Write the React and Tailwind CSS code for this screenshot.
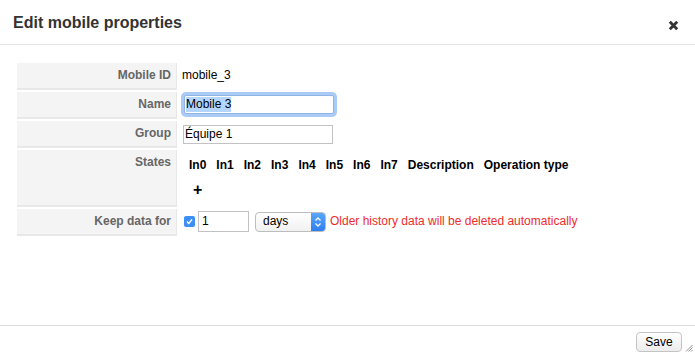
import React from 'react'

const font = { fontFamily: '"Liberation Sans", Arial, sans-serif' }

function Row({ label, tall, children }) {
  return (
    <div className={`flex ${tall ? 'h-[57px]' : 'h-[27px]'}`}>
      <div className="w-[160px] shrink-0 bg-[#f4f4f4] border-r border-b-2 border-[#e8e8e8] flex justify-end pr-[5px] pt-[5px]">
        <span className="text-[12px] font-bold text-[#666] leading-[15px]">{label}</span>
      </div>
      <div className="flex-1 pl-[4px]">{children}</div>
    </div>
  )
}

function CloseIcon() {
  return (
    <svg width="11" height="11" viewBox="0 0 11 11">
      <path d="M1.8 1.8 L9.2 9.2 M9.2 1.8 L1.8 9.2" stroke="#333" strokeWidth="2.8" strokeLinecap="butt" />
    </svg>
  )
}

export default function App() {
  const states = ['In0', 'In1', 'In2', 'In3', 'In4', 'In5', 'In6', 'In7', 'Description', 'Operation type']

  return (
    <div className="w-[695px] h-[354px] bg-white flex flex-col text-black" style={font}>
      {/* Header */}
      <div className="h-[45px] shrink-0 border-b border-[#e5e5e5] flex items-start justify-between pl-[13px] pr-[16px]">
        <h3 className="text-[16px] font-bold text-[#333] leading-[20px] mt-[13px]">Edit mobile properties</h3>
        <button className="mt-[20px]"><CloseIcon /></button>
      </div>

      {/* Body */}
      <div className="flex-1 pt-[18px] px-[17px]">
        <div className="flex flex-col gap-[2px] w-[660px]">
          <Row label="Mobile ID">
            <div className="text-[12px] leading-[15px] pt-[5px] pl-[1px]">mobile_3</div>
          </Row>
          <Row label="Name">
            <div className="pt-[3px] pl-[3px]">
              <div className="w-[150px] h-[19px] border border-[#8fb5e6] ring-[3px] ring-[#a9cbf5] rounded-[2px] bg-white flex items-center px-[1px]">
                <span className="text-[12px] leading-[15px] bg-[#b4d5fe]">Mobile 3</span>
              </div>
            </div>
          </Row>
          <Row label="Group">
            <div className="pt-[4px] pl-[2px]">
              <div className="w-[150px] h-[19px] border border-[#c2c2c2] bg-white flex items-center px-[1px]">
                <span className="text-[12px] leading-[15px]">Équipe 1</span>
              </div>
            </div>
          </Row>
          <Row label="States" tall>
            <div className="pl-[8px] pt-[8px]">
              <div className="flex gap-[10px] text-[12px] font-bold leading-[15px]">
                {states.map((s) => (
                  <span key={s}>{s}</span>
                ))}
              </div>
              <div className="text-[16px] font-bold leading-[16px] mt-[9px] pl-[4px]">+</div>
            </div>
          </Row>
          <Row label="Keep data for">
            <div className="flex items-center h-[25px] pl-[3px]">
              <div className="w-[11px] h-[11px] rounded-[2px] bg-[#3d8ff5] flex items-center justify-center">
                <svg width="9" height="9" viewBox="0 0 9 9">
                  <path d="M2 4.6 L3.8 6.4 L7 2.6" stroke="#fff" strokeWidth="1.5" fill="none" />
                </svg>
              </div>
              <div className="ml-[3px] w-[51px] h-[21px] border border-[#c2c2c2] bg-white flex items-center pl-[3px]">
                <span className="text-[12px] leading-[15px]">1</span>
              </div>
              <div className="ml-[6px] w-[71px] h-[20px] border border-[#bdbdbd] rounded-[4px] bg-gradient-to-b from-white to-[#f1f1f1] flex items-center overflow-hidden">
                <span className="flex-1 text-[12px] leading-[15px] pl-[7px]">days</span>
                <div className="w-[14px] h-full bg-gradient-to-b from-[#5aa6fb] to-[#2e7ef0] flex items-center justify-center">
                  <svg width="8" height="12" viewBox="0 0 8 12">
                    <path d="M1.5 4.5 L4 2 L6.5 4.5 M1.5 7.5 L4 10 L6.5 7.5" stroke="#fff" strokeWidth="1.3" fill="none" />
                  </svg>
                </div>
              </div>
              <span className="ml-[4px] text-[12px] leading-[15px] text-[#ee2b2b]">Older history data will be deleted automatically</span>
            </div>
          </Row>
        </div>
      </div>

      {/* Footer */}
      <div className="h-[29px] shrink-0 border-t border-[#dcdcdc] flex items-start justify-end pr-[13px] pt-[6px] relative">
        <button className="w-[46px] h-[20px] border border-[#c4c4c4] rounded-[4px] bg-gradient-to-b from-white to-[#ececec] text-[12px] leading-[15px] text-black">
          Save
        </button>
        <svg className="absolute right-[2px] bottom-[2px]" width="8" height="8" viewBox="0 0 8 8">
          <path d="M7.5 1 L1 7.5 M7.5 3.5 L3.5 7.5 M7.5 6 L6 7.5" stroke="#777" strokeWidth="0.8" />
        </svg>
      </div>
    </div>
  )
}
